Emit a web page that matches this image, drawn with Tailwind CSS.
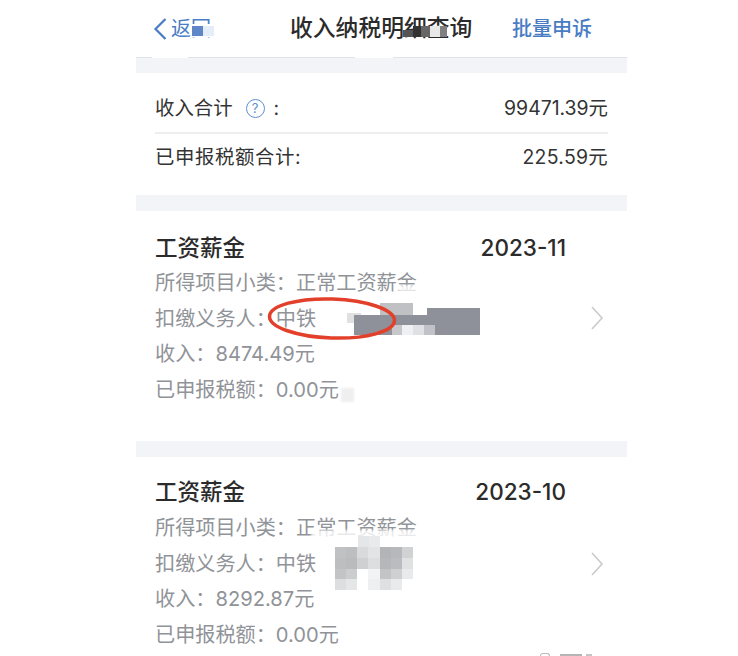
<!DOCTYPE html>
<html lang="zh-CN">
<head>
  <meta charset="UTF-8"/>
  <meta name="viewport" content="width=device-width, initial-scale=1.0"/>
  <title>收入纳税明细查询</title>
  <script src="https://cdn.jsdelivr.net/npm/@tailwindcss/browser@4"></script>
</head>
<body class="bg-white h-[656px] overflow-hidden font-['Inter','Noto_Sans_CJK_SC',sans-serif]">
  <div class="relative w-[491px] h-[656px] ml-[136px] overflow-hidden bg-white">

    <!-- nav -->
    <div class="relative h-[57px] flex items-center justify-between pl-[17px] pr-[35px] pt-[1px]">
      <div class="flex items-center gap-[3px] text-[20px] text-[#4a7cc4]">
        <svg width="15" height="24" viewBox="0 0 15 24" fill="none" stroke="#4a7cc4" stroke-width="2.2"><path d="M12.5 2 2.5 12l10 10"/></svg>
        <span>返回</span>
      </div>
      <div class="absolute left-[154px] top-[5px] text-[22.8px] font-medium leading-[45px] text-[#2b2b2b] whitespace-nowrap">收入纳税明细查询</div>
      <div class="text-[20px] font-medium text-[#4a7cc4]">批量申诉</div>
    </div>

    <div class="h-[16px] bg-[#f2f4f8] border-t border-[#e1e3ea]"></div>

    <!-- totals -->
    <div class="h-[122px] px-[19px] pt-[13px] text-[19.4px] text-[#333]">
      <div class="h-[48px] flex items-center justify-between border-b-2 border-[#eeeeee]">
        <div class="flex items-center">
          <span>收入合计</span>
          <span class="w-[19px] h-[19px] ml-[13px] mr-[9px] rounded-full border border-[#5b8fd0] text-[#5b8fd0] text-[13px] leading-[17px] text-center">?</span>
          <span>:</span>
        </div>
        <span>99471.39元</span>
      </div>
      <div class="h-[48px] flex items-center justify-between">
        <span class="tracking-[0.6px]">已申报税额合计:</span>
        <span class="tracking-[0.3px]">225.59元</span>
      </div>
    </div>

    <div class="h-[16px] bg-[#f2f4f8]"></div>

    <!-- record 1 -->
    <div class="relative h-[230px] px-[19px] pt-[18px]">
      <div class="flex justify-between pr-[42px] h-[36px] text-[22.5px] font-medium leading-[38px] text-[#2b2b2b]">
        <span>工资薪金</span>
        <span>2023-11</span>
      </div>
      <div class="text-[20.15px] leading-[35.6px] text-[#909398]">
        <div>所得项目小类：正常工资薪金</div>
        <div>扣缴义务人：中铁</div>
        <div>收入：8474.49元</div>
        <div>已申报税额：0.00元</div>
      </div>
      <svg class="absolute left-[454px] top-[94px]" width="14" height="26" viewBox="0 0 14 26" fill="none" stroke="#c8cacd" stroke-width="1.6"><path d="M2 2l10 11L2 24"/></svg>
    </div>

    <div class="h-[16px] bg-[#f2f4f8]"></div>

    <!-- record 2 -->
    <div class="relative h-[199px] px-[19px] pt-[16px]">
      <div class="flex justify-between pr-[42px] h-[37px] text-[22.5px] font-medium leading-[38px] text-[#2b2b2b]">
        <span>工资薪金</span>
        <span>2023-10</span>
      </div>
      <div class="text-[20.15px] leading-[35.6px] text-[#909398]">
        <div>所得项目小类：正常工资薪金</div>
        <div>扣缴义务人：中铁</div>
        <div>收入：8292.87元</div>
        <div>已申报税额：0.00元</div>
      </div>
      <svg class="absolute left-[454px] top-[94px]" width="14" height="26" viewBox="0 0 14 26" fill="none" stroke="#c8cacd" stroke-width="1.6"><path d="M2 2l10 11L2 24"/></svg>
    </div>

    <!-- gaps in the nav border -->
    <div class="absolute left-[16px] top-[56px] w-[36px] h-[2px] bg-white"></div>
    <div class="absolute left-[219px] top-[56px] w-[38px] h-[2px] bg-white"></div>

    <!-- mosaic over the back label -->
    <div class="absolute left-[55px] top-[24px] w-[24px] h-[13px] bg-white"></div>
    <div class="absolute left-[56px] top-[26px] w-[11px] h-[10px] bg-[#5f86c6]"></div>
    <div class="absolute left-[67px] top-[26px] w-[11px] h-[10px] bg-[#e4edf8]"></div>

    <!-- mosaic over the title -->
    <div class="absolute left-[267px] top-[30px] w-[10px] h-[7px] bg-[#555]"></div>
    <div class="absolute left-[277px] top-[26px] w-[8px] h-[11px] bg-[#333]"></div>
    <div class="absolute left-[285px] top-[26px] w-[9px] h-[11px] bg-[#666]"></div>
    <div class="absolute left-[294px] top-[26px] w-[10px] h-[11px] bg-[#e8e8e8]"></div>
    <div class="absolute left-[304px] top-[26px] w-[7px] h-[11px] bg-[#808080]"></div>

    <!-- mosaic record 1 -->
    <div class="absolute left-[262px] top-[285px] w-[20px] h-[7px] bg-white/80 blur-[1px]"></div>
    <div class="absolute left-[211px] top-[313px] w-[14px] h-[10px] bg-[#e0e0e0]"></div>
    <div class="absolute left-[218px] top-[315px] w-[126px] h-[20px] bg-[#8e9199]"></div>
    <div class="absolute left-[291px] top-[308px] w-[53px] h-[8px] bg-[#8e9199]"></div>
    <div class="absolute left-[244px] top-[303px] w-[33px] h-[12px] bg-[#bfc1c5]"></div>
    <div class="absolute left-[256px] top-[325px] w-[10px] h-[10px] bg-[#c5c7cb]"></div>
    <div class="absolute left-[266px] top-[325px] w-[11px] h-[10px] bg-[#eef0f3]"></div>
    <div class="absolute left-[277px] top-[325px] w-[11px] h-[10px] bg-[#dfe1e5]"></div>
    <div class="absolute left-[288px] top-[325px] w-[11px] h-[10px] bg-[#c0c2c7]"></div>
    <div class="absolute left-[205px] top-[388px] w-[13px] h-[14px] bg-[#efefef] blur-[1px]"></div>

    <!-- mosaic record 2 -->
    <div class="absolute left-[175px] top-[530px] w-[110px] h-[9px] bg-white/80 blur-[1px]"></div>
    <div class="absolute left-[222px] top-[536px] w-[11px] h-[11px] bg-[#e4e6e8]"></div>
    <div class="absolute left-[233px] top-[536px] w-[11px] h-[11px] bg-[#e8eaec]"></div>
    <div class="absolute left-[199px] top-[547px] w-[78px] h-[43px] grid grid-cols-7 grid-rows-4 blur-[0.5px]">
      <div class="bg-[#bfc1c3]"></div><div class="bg-[#bcbec0]"></div><div class="bg-[#d8dadc]"></div><div class="bg-[#e2e4e6]"></div><div class="bg-[#b2b4b7]"></div><div class="bg-[#b6b8bb]"></div><div class="bg-[#d0d2d4]"></div>
      <div class="bg-[#bcbec0]"></div><div class="bg-[#b9bbbd]"></div><div class="bg-[#ced0d2]"></div><div class="bg-[#dcdee0]"></div><div class="bg-[#b5b7ba]"></div><div class="bg-[#babcbf]"></div><div class="bg-[#dfe1e3]"></div>
      <div class="bg-[#c2c4c6]"></div><div class="bg-[#cbcdcf]"></div><div class="bg-white"></div><div class="bg-[#f2f3f4]"></div><div class="bg-[#c2c4c6]"></div><div class="bg-[#ced0d2]"></div><div class="bg-[#e8eaec]"></div>
      <div class="bg-[#dcdee0]"></div><div class="bg-[#e4e6e8]"></div><div class="bg-white"></div><div class="bg-[#eeeff0]"></div><div class="bg-[#dee0e2]"></div><div class="bg-[#e8eaec]"></div><div class="bg-white"></div>
    </div>

    <!-- red circle -->
    <svg class="absolute left-[130px] top-[295px]" width="132" height="46" viewBox="0 0 132 46" fill="none"><ellipse cx="66" cy="23.5" rx="62.5" ry="19.5" transform="rotate(2 66 23.5)" stroke="#e2402a" stroke-width="3.5"/></svg>

    <!-- watermark remnant -->
    <div class="absolute left-[404px] top-[653px] w-[10px] h-[3px] border-t border-x border-[#bbb] rounded-t-full"></div>
    <div class="absolute left-[424px] top-[654px] w-[22px] h-[2px] bg-[#b5b5b5]"></div>
    <div class="absolute left-[450px] top-[654px] w-[6px] h-[2px] bg-[#c5c5c5]"></div>
  </div>
</body>
</html>
